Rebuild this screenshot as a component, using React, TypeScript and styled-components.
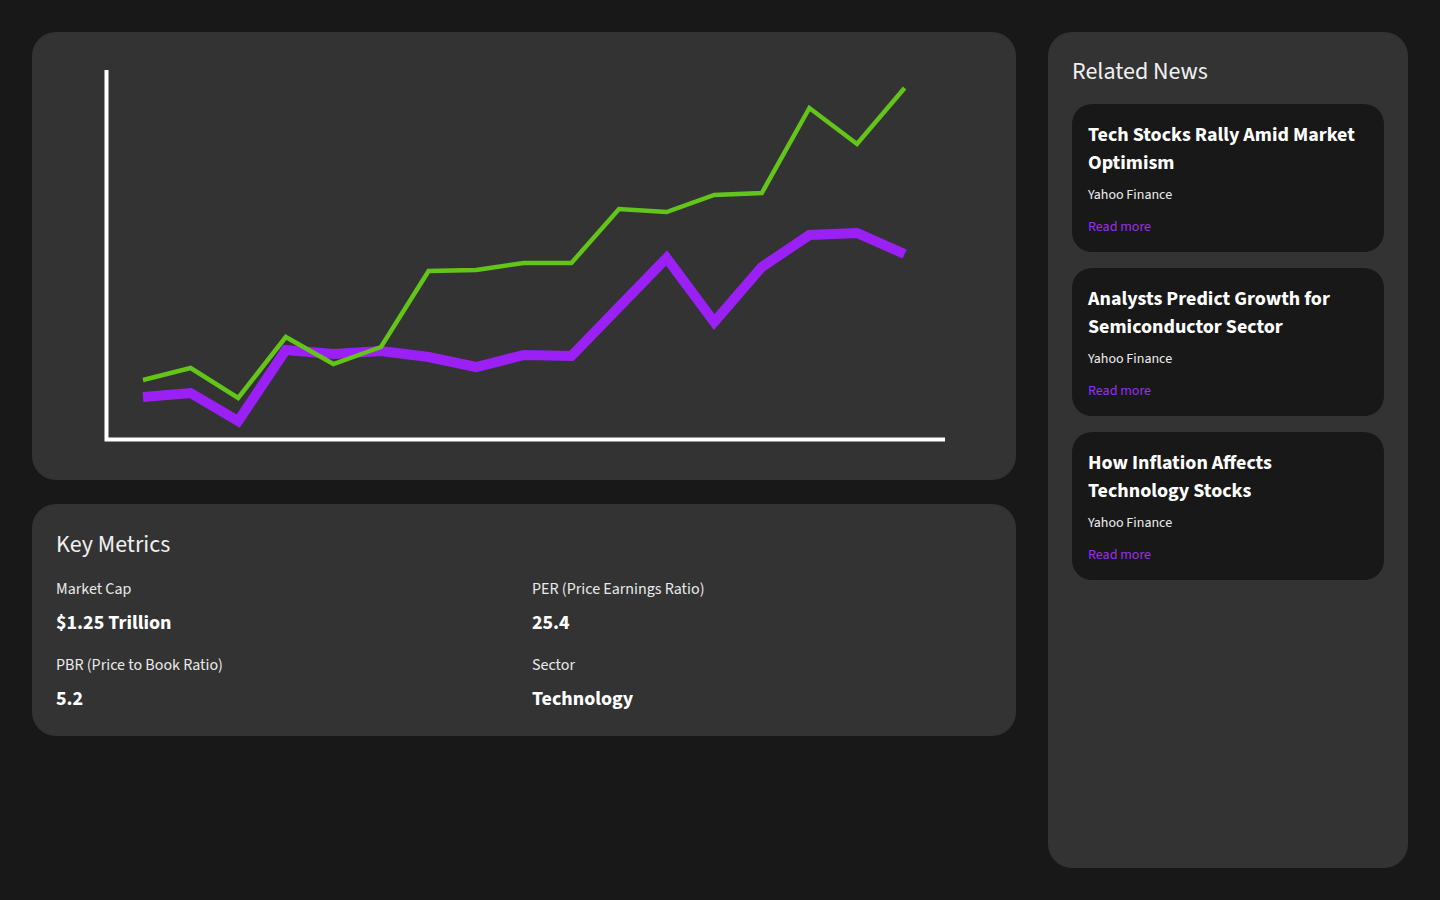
import React from "react";
import styled, { createGlobalStyle } from "styled-components";

const GlobalStyle = createGlobalStyle`
  html, body {
    margin: 0;
    padding: 0;
    background: #181818;
  }
  body {
    font-family: "Source Sans Pro", "Source Sans 3", Lato, "Noto Sans", sans-serif;
    color: #f2f2f2;
  }
  * { box-sizing: border-box; }
`;

const Page = styled.div`
  display: grid;
  grid-template-columns: 1fr 360px;
  gap: 32px;
  padding: 32px;
  height: 900px;
`;

const MainColumn = styled.div`
  display: flex;
  flex-direction: column;
  gap: 24px;
  min-width: 0;
`;

const Panel = styled.section<{ $textShift?: boolean }>`
  background: #333333;
  border-radius: 24px;
  padding: ${(p) => (p.$textShift ? "25px 24px 23px" : "24px")};
`;

const ChartSvg = styled.svg`
  display: block;
  width: 100%;
  height: 400px;
`;

const PanelTitle = styled.h2`
  margin: 0 0 16px;
  font-size: 24px;
  line-height: 32px;
  font-weight: 400;
  color: #f0f0f0;
`;

const MetricsGrid = styled.div`
  display: grid;
  grid-template-columns: 1fr 1fr;
  column-gap: 16px;
  row-gap: 16px;
`;

const Metric = styled.div`
  display: flex;
  flex-direction: column;
  gap: 8px;
`;

const MetricLabel = styled.span`
  font-size: 16px;
  line-height: 24px;
  color: #eaeaea;
`;

const MetricValue = styled.span`
  font-size: 20px;
  line-height: 28px;
  font-weight: 700;
  color: #ffffff;
`;

const NewsPanel = styled(Panel)`
  height: 836px;
`;

const NewsList = styled.div`
  display: flex;
  flex-direction: column;
  gap: 16px;
`;

const NewsCard = styled.article`
  background: #181818;
  border-radius: 20px;
  padding: 17px 16px 15px;
`;

const NewsTitle = styled.h3`
  margin: 0 0 8px;
  font-size: 20px;
  line-height: 28px;
  font-weight: 700;
  color: #ffffff;
`;

const NewsSource = styled.p`
  margin: 0 0 12px;
  font-size: 14px;
  line-height: 20px;
  color: #eeeeee;
`;

const ReadMore = styled.a`
  display: block;
  font-size: 14px;
  line-height: 20px;
  color: #9b2ff0;
  text-decoration: none;
`;

const green = [380, 368, 398, 337, 364, 347, 271, 270, 263, 263, 209, 212, 195, 193, 108, 144, 88];
const purple = [397, 393, 421, 350, 354, 351, 357, 367, 355, 356, 307, 258, 322, 267, 235, 233, 254];

const toPoints = (ys: number[]) =>
  ys.map((y, i) => `${(143 + i * 47.6).toFixed(1)},${y}`).join(" ");

const metrics = [
  { label: "Market Cap", value: "$1.25 Trillion" },
  { label: "PER (Price Earnings Ratio)", value: "25.4" },
  { label: "PBR (Price to Book Ratio)", value: "5.2" },
  { label: "Sector", value: "Technology" },
];

const news = [
  "Tech Stocks Rally Amid Market Optimism",
  "Analysts Predict Growth for Semiconductor Sector",
  "How Inflation Affects Technology Stocks",
];

export default function App() {
  return (
    <>
      <GlobalStyle />
      <Page>
        <MainColumn>
          <Panel>
            <ChartSvg viewBox="56 56 936 400" preserveAspectRatio="none">
              <polyline
                points="106.5,70 106.5,439.5 945,439.5"
                fill="none"
                stroke="#ffffff"
                strokeWidth={4}
              />
              <polyline
                points={toPoints(purple)}
                fill="none"
                stroke="#9b20f6"
                strokeWidth={10}
              />
              <polyline
                points={toPoints(green)}
                fill="none"
                stroke="#63c41a"
                strokeWidth={4.5}
              />
            </ChartSvg>
          </Panel>
          <Panel $textShift>
            <PanelTitle>Key Metrics</PanelTitle>
            <MetricsGrid>
              {metrics.map((m) => (
                <Metric key={m.label}>
                  <MetricLabel>{m.label}</MetricLabel>
                  <MetricValue>{m.value}</MetricValue>
                </Metric>
              ))}
            </MetricsGrid>
          </Panel>
        </MainColumn>
        <NewsPanel>
          <PanelTitle>Related News</PanelTitle>
          <NewsList>
            {news.map((t) => (
              <NewsCard key={t}>
                <NewsTitle>{t}</NewsTitle>
                <NewsSource>Yahoo Finance</NewsSource>
                <ReadMore href="#">Read more</ReadMore>
              </NewsCard>
            ))}
          </NewsList>
        </NewsPanel>
      </Page>
    </>
  );
}
